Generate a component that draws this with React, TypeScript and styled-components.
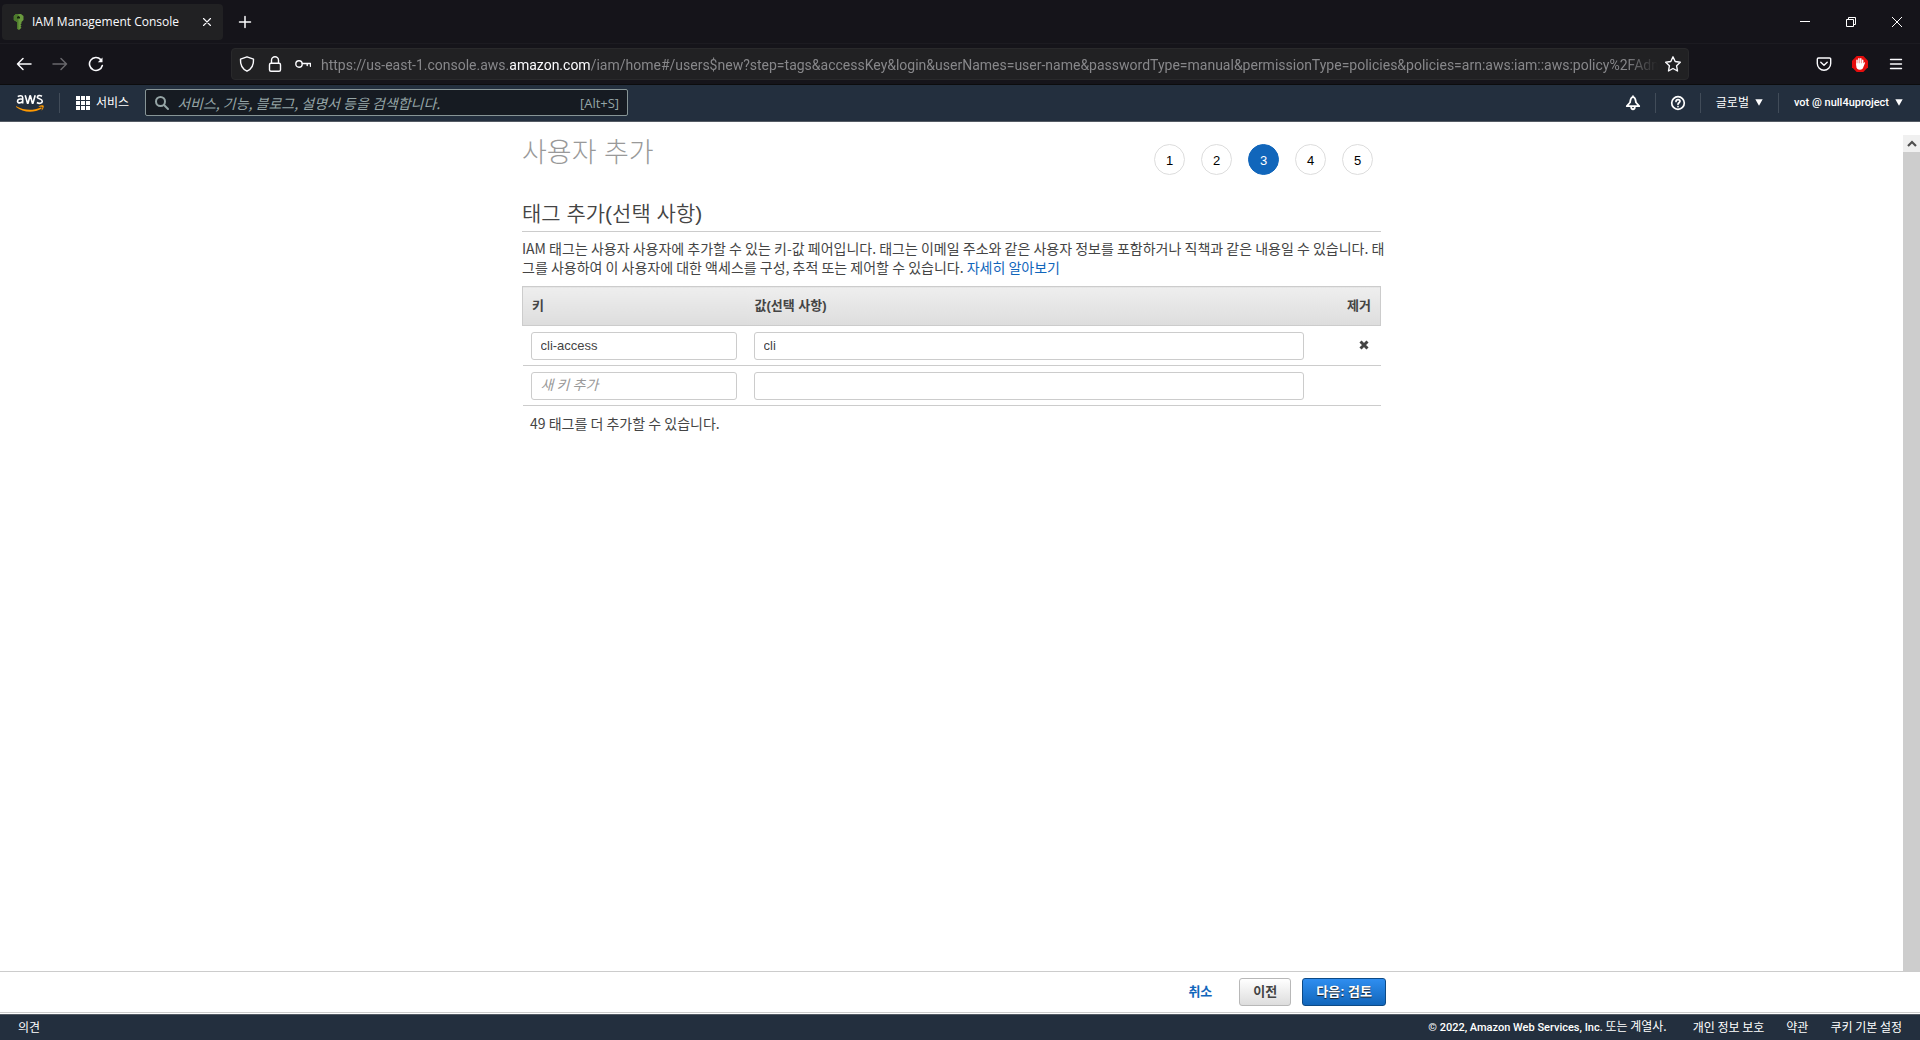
import React from "react";
import styled, { createGlobalStyle } from "styled-components";

const ui = `"Open Sans", "Noto Sans CJK KR", sans-serif`;
const compact = `Roboto, "Noto Sans CJK KR", sans-serif`;
const arial = `"Liberation Sans", "Noto Sans CJK KR", sans-serif`;
const korean = `"Noto Sans CJK KR", sans-serif`;

const Global = createGlobalStyle`
  * { box-sizing: border-box; }
  body { margin: 0; background: #fff; color: #444; font: 13px/19px ${arial}; }
  button, input { font: inherit; color: inherit; margin: 0; }
  button { cursor: pointer; }
  a { text-decoration: none; }
  svg { display: block; flex: none; }
`;

const Screen = styled.div`
  display: flex;
  flex-direction: column;
  height: 100vh;
  overflow: hidden;
`;

/* Browser window */
const TitleBar = styled.header`
  display: flex;
  align-items: center;
  height: 44px;
  padding: 0 2px;
  flex: none;
  background: #15141a;
  border-bottom: 1px solid #1c1b21;
  color: #fbfbfe;
  font-family: ${ui};
`;

const Tab = styled.div`
  display: flex;
  align-items: center;
  gap: 8px;
  width: 221px;
  height: 36px;
  padding: 0 4px 0 11px;
  border-radius: 4px;
  background: #212123;
  font-size: 12px;
`;

const TabTitle = styled.span`
  flex: 1;
  white-space: nowrap;
`;

const IconButton = styled.button<{ $w?: number; $h?: number }>`
  display: flex;
  align-items: center;
  justify-content: center;
  width: ${(p) => p.$w ?? 36}px;
  height: ${(p) => p.$h ?? 32}px;
  padding: 0;
  border: 0;
  background: none;
  color: inherit;
  flex: none;
`;

const WindowControls = styled.div`
  display: flex;
  margin-left: auto;
  margin-right: -2px;
`;

const NavBar = styled.nav`
  display: flex;
  align-items: center;
  height: 41px;
  padding: 0 6px;
  flex: none;
  background: #15141a;
  border-bottom: 1px solid #0c0c0d;
  color: #fbfbfe;
`;

const AddressBar = styled.div`
  display: flex;
  align-items: center;
  flex: 1;
  min-width: 0;
  height: 32px;
  margin: 0 117px;
  padding-left: 1px;
  border: 1px solid #29292b;
  border-radius: 4px;
  background: #212123;
`;

const Url = styled.div`
  flex: 1;
  min-width: 0;
  overflow: hidden;
  white-space: nowrap;
  margin-left: 4px;
  padding-top: 2px;
  font: 14px/20px ${compact};
  color: #87878a;
  mask-image: linear-gradient(to left, transparent, #000 32px);

  strong { font-weight: 400; color: #fbfbfe; }
`;

const Toolbar = styled.div`
  display: flex;
`;

/* AWS console header */
const ConsoleHeader = styled.header`
  display: flex;
  align-items: center;
  height: 37px;
  padding: 0 2px 1px 16px;
  flex: none;
  background: #232f3e;
  border-bottom: 1px solid #545b64;
  color: #fff;
  font: 12px/16px ${ui};
`;

const Divider = styled.span`
  width: 1px;
  height: 20px;
  background: #414c59;
`;

const LogoDivider = styled(Divider)`
  margin-left: 15px;
`;

const HeaderButton = styled.button<{ $pad?: number; $account?: boolean }>`
  display: flex;
  align-items: center;
  gap: 6px;
  height: 28px;
  padding: 0 ${(p) => p.$pad ?? 15}px;
  border: 0;
  background: none;
  color: #fff;
  font-family: ${compact};
  font-size: ${(p) => (p.$account ? 11 : 12)}px;
  font-weight: ${(p) => (p.$account ? 500 : 400)};
  white-space: nowrap;
`;

const Search = styled.label`
  display: flex;
  align-items: center;
  gap: 7px;
  width: 483px;
  height: 27px;
  padding: 0 8px;
  border: 1px solid #879596;
  border-radius: 2px;
  background: #161b22;
  color: #95a5a6;
  font-size: 13px;
`;

const SearchInput = styled.input`
  flex: 1;
  min-width: 0;
  height: 20px;
  padding: 0;
  border: 0;
  outline: 0;
  background: none;
  font: 14px/20px ${korean};

  &::placeholder { color: #95a5a6; font-style: italic; opacity: 1; }
`;

const HeaderRight = styled.div`
  display: flex;
  align-items: center;
  margin-left: auto;
`;

/* Page */
const Body = styled.div`
  display: flex;
  flex: 1;
  min-height: 0;
`;

const Main = styled.main`
  flex: 1;
  min-width: 0;
`;

const Content = styled.div`
  max-width: 859px;
  margin: 0 auto;
`;

const TitleRow = styled.div`
  display: flex;
  justify-content: space-between;
  padding: 14px 8px 0 0;
`;

const Title = styled.h1`
  margin: 0;
  padding-top: 1px;
  font-size: 27px;
  line-height: 32px;
  font-weight: 300;
  color: #999;
`;

const Steps = styled.ol`
  display: flex;
  gap: 16px;
  margin: 0;
  padding: 8px 0 0;
  list-style: none;
`;

const Step = styled.li<{ $active: boolean }>`
  width: 31px;
  height: 31px;
  border: 1px solid ${(p) => (p.$active ? "#1166bb" : "#ddd")};
  border-radius: 50%;
  background: ${(p) => (p.$active ? "#1166bb" : "#fff")};
  color: ${(p) => (p.$active ? "#fff" : "#000")};
  line-height: 31px;
  text-align: center;
`;

const Heading = styled.h2`
  margin: 25px 0 7px;
  padding-bottom: 3px;
  border-bottom: 1px solid #ccc;
  font-size: 21px;
  line-height: 28px;
  font-weight: 350;
`;

const Intro = styled.p`
  margin: 0 0 9px;
  font: 14px/19px ${korean};
  white-space: nowrap;
`;

const Link = styled.a`
  color: #1166bb;
`;

const TagTable = styled.table`
  width: 100%;
  border-collapse: collapse;
  table-layout: fixed;
`;

const Th = styled.th<{ $w?: number; $right?: boolean }>`
  width: ${(p) => (p.$w ? `${p.$w}px` : "auto")};
  height: 39px;
  padding: 0 9px 2px;
  border: solid #ccc;
  border-width: 1px 0;
  background: linear-gradient(#eee, #ddd);
  text-align: ${(p) => (p.$right ? "right" : "left")};
  font-weight: 700;
  &:first-child { border-left-width: 1px; }
  &:last-child { border-right-width: 1px; }
`;

const Td = styled.td<{ $right?: boolean }>`
  height: 40px;
  padding: 0 ${(p) => (p.$right ? 10 : 9)}px 0 8px;
  border-bottom: 1px solid #ccc;
  text-align: ${(p) => (p.$right ? "right" : "left")};
`;

const TagInput = styled.input`
  display: block;
  width: 100%;
  height: 28px;
  padding: 0 9px;
  border: 1px solid #ccc;
  border-radius: 3px;
  background: #fff;

  &::placeholder {
    color: #999;
    font: italic 14px/19px ${korean};
    opacity: 1;
  }
`;

const RemoveButton = styled.button`
  padding: 2px;
  border: 0;
  background: none;
`;

const Remaining = styled.p`
  margin: 8px;
  font: 14px/19px ${korean};
`;

const ScrollTrack = styled.div`
  display: flex;
  flex-direction: column;
  width: 17px;
  margin-top: 13px;
  background: #f0f0f0;
`;

const ScrollThumb = styled.div`
  flex: 1;
  background: #cdcdcd;
`;

const ActionBar = styled.div`
  flex: none;
  border-top: 1px solid #ccc;
  border-bottom: 1px solid #ccc;
  margin-bottom: 1px;
`;

const Actions = styled.div`
  display: flex;
  align-items: center;
  justify-content: flex-end;
  max-width: 860px;
  height: 40px;
  margin: 0 auto;
  padding: 0 4px 0 0;
`;

const ActionButton = styled.button<{ $kind: "link" | "plain" | "primary" }>`
  height: 28px;
  margin-left: 11px;
  padding: 0 ${(p) => (p.$kind === "link" ? 15 : 13)}px 2px;
  border: 1px solid ${(p) => ({ link: "transparent", plain: "#b8b8b8", primary: "#0d4a86" })[p.$kind]};
  border-radius: 3px;
  background: ${(p) =>
    ({ link: "none", plain: "linear-gradient(#fff, #ddd)", primary: "linear-gradient(#2f8ef0, #1166bb)" })[p.$kind]};
  color: ${(p) => ({ link: "#1166bb", plain: "#444", primary: "#fff" })[p.$kind]};
  text-shadow: ${(p) => (p.$kind === "primary" ? "0 1px 1px #222" : "none")};
  font-weight: 700;
`;

const Footer = styled.footer`
  display: flex;
  align-items: center;
  gap: 22px;
  height: 26px;
  padding: 0 18px 2px;
  flex: none;
  border-top: 1px solid #545b64;
  background: #232f3e;
  color: #fff;
  font: 12px/16px ${korean};
  white-space: nowrap;

  a { color: #fff; }
`;

const Copyright = styled.span`
  margin-left: auto;
  margin-right: 4px;

  span {
    font-family: ${compact};
    font-size: 11px;
    font-weight: 500;
  }
`;

const Stroke = ({ s = 16, w = 1.4, children }: { s?: number; w?: number; children: React.ReactNode }) => (
  <svg width={s} height={s} viewBox="0 0 16 16" fill="none" stroke="currentColor" strokeWidth={w} strokeLinecap="round" strokeLinejoin="round" aria-hidden="true">
    {children}
  </svg>
);

const Caret = () => (
  <svg width="8" height="7" viewBox="0 0 8 7" aria-hidden="true">
    <path d="M.3 .3h7.4L4 6.8z" fill="#fff" />
  </svg>
);

const KeyFavicon = () => (
  <svg width="11" height="16" viewBox="0 0 11 16" aria-hidden="true">
    <path d="M3 0h5l2.500 2v4L8.500 8v1.500l-1 1 1 1-1 1.200 1 1L6 16l-2-1.500V8L.8 6V2z" fill="#6a9a3e" />
    <path d="M3 0h2.500v16L4 14.500V8L.8 6V2z" fill="#4c7a2c" />
    <path d="M4 3l1.500-1L7 3v1.500H4z" fill="#15240c" />
  </svg>
);

const AwsLogo = () => (
  <svg width="28" height="18" viewBox="0 0 28 18" fill="none" aria-label="aws">
    <g stroke="#fff" strokeWidth="1.600" strokeLinejoin="round">
      <path d="M1.800 2.700C3.500 1.300 6.700 1.100 6.700 3.700V9.500M6.700 5.300C3.800 4.600 1.500 5.200 1.500 7.300S5.500 9.600 6.700 7" />
      <path d="M9.200 1.300l2.300 7.900h.5l2-7.500h.4l2 7.500h.5l2.300-7.900" />
      <path d="M26 2.200C23.800 1.100 21.300 1.400 21.300 3.200s5 1.500 5 4-3.500 2.600-5.400 1.300" />
    </g>
    <path d="M.3 12.300c7.500 4.300 16.500 4.700 24.400 1.300.9-.4 1.500.5.7 1.100C18 19.300 6.500 18.600.1 12.900c-.3-.4-.1-.8.2-.6z" fill="#f90" />
    <path d="M22.800 12.200c1.500-1.100 4.300-1.100 4.800-.5s-.2 3.400-1.600 4.600c-.3.200-.5.100-.4-.2.500-1.200 1.100-2.700.8-3.100s-2.200-.3-3.300-.2c-.5 0-.6-.3-.3-.6z" fill="#f90" />
  </svg>
);

const AppGrid = () => (
  <svg width="14" height="14" viewBox="0 0 14 14" fill="#fff" aria-hidden="true">
    {[0, 5, 10].map((y) => [0, 5, 10].map((x) => <rect key={`${x}-${y}`} x={x} y={y} width="4" height="4" />))}
  </svg>
);

const rows = [
  { key: "cli-access", value: "cli" },
  { key: "", value: "" },
];

export default function App() {
  return (
    <Screen>
      <Global />
      <TitleBar>
        <Tab>
          <KeyFavicon />
          <TabTitle>IAM Management Console</TabTitle>
          <IconButton $w={24} $h={24} aria-label="Close tab">
            <Stroke s={14} w={1.3}><path d="M4 4l8 8M12 4l-8 8" /></Stroke>
          </IconButton>
        </Tab>
        <IconButton $w={44} aria-label="New tab">
          <Stroke w={1.5}><path d="M8 2.500v11M2.500 8h11" /></Stroke>
        </IconButton>
        <WindowControls>
          <IconButton $w={46} aria-label="Minimize">
            <svg width="10" height="10" viewBox="0 0 10 10" stroke="#fff"><path d="M0 4.500h10" /></svg>
          </IconButton>
          <IconButton $w={46} aria-label="Restore">
            <svg width="10" height="10" viewBox="0 0 10 10" fill="none" stroke="#fff"><path d="M.5 2.500h7v7h-7zM2.500 2.500v-2h7v7h-2" /></svg>
          </IconButton>
          <IconButton $w={46} aria-label="Close">
            <svg width="10" height="10" viewBox="0 0 10 10" stroke="#fff"><path d="M0 0l10 10M10 0L0 10" /></svg>
          </IconButton>
        </WindowControls>
      </TitleBar>

      <NavBar>
        <IconButton aria-label="Back">
          <Stroke w={1.5}><path d="M15 8H1.500M7 2.500L1.500 8 7 13.500" /></Stroke>
        </IconButton>
        <IconButton aria-label="Forward" disabled>
          <Stroke w={1.5}><path stroke="#68676c" d="M1 8h13.500M9 2.500L14.500 8 9 13.500" /></Stroke>
        </IconButton>
        <IconButton aria-label="Reload">
          <Stroke w={1.6}><path d="M14.300 9.500A6.500 6.500 0 1 1 12.800 3.600" /><path d="M14.500 1.500v4.700H9.800z" fill="currentColor" stroke="none" /></Stroke>
        </IconButton>
        <AddressBar>
          <IconButton $w={28} aria-label="Tracking protection">
            <Stroke><path d="M8 .8L1.500 3.200C1.200 8 2.500 12.500 8 15.200 13.500 12.500 14.800 8 14.500 3.200z" /></Stroke>
          </IconButton>
          <IconButton $w={28} aria-label="Site information">
            <Stroke><rect x="2.500" y="7.200" width="11" height="8" rx="1.500" /><path d="M4.500 7V4.200a3.500 3.500 0 0 1 7 0V7" /></Stroke>
          </IconButton>
          <IconButton $w={28} aria-label="Saved login">
            <Stroke><circle cx="4" cy="8" r="3.200" /><path d="M7.300 7.500h8.200v2.800M12.200 7.500v2" /></Stroke>
          </IconButton>
          <Url>
            https://us-east-1.console.aws.<strong>amazon.com</strong>
            /iam/home#/users$new?step=tags&amp;accessKey&amp;login&amp;userNames=user-name&amp;passwordType=manual&amp;permissionType=policies&amp;policies=arn:aws:iam::aws:policy%2FAdmi
          </Url>
          <IconButton $w={30} aria-label="Bookmark">
            <Stroke><path d="M8 .8l2.200 4.700 5.100.7-3.700 3.600.9 5.200L8 12.500 3.500 15l.9-5.200L.7 6.200l5.100-.7z" /></Stroke>
          </IconButton>
        </AddressBar>
        <Toolbar>
          <IconButton aria-label="Pocket">
            <Stroke><path d="M2.500 2h11A1.200 1.200 0 0 1 14.700 3.200V7.500A6.700 6.700 0 0 1 1.300 7.500V3.200A1.200 1.200 0 0 1 2.500 2zM4.800 6.300L8 9.300l3.200-3" /></Stroke>
          </IconButton>
          <IconButton aria-label="Ad blocker">
            <svg width="16" height="16" viewBox="0 0 16 16" aria-hidden="true">
              <path d="M4.700 0h6.600L16 4.700v6.600L11.300 16H4.700L0 11.300V4.700z" fill="#e40d0d" />
              <path d="M5 9V4.200M6.900 8V2.800M8.800 8V2.800M10.700 9V4.200" stroke="#fff" strokeWidth="1.500" strokeLinecap="round" />
              <path d="M4.300 7.200h7.200l.8-.8c.6-.4 1 .2.700.7l-2 5c-.5 1.300-1.500 1.700-3 1.700-2.500 0-3.700-1.500-3.700-3.500z" fill="#fff" />
            </svg>
          </IconButton>
          <IconButton aria-label="Menu">
            <Stroke w={1.4}><path d="M2.500 3.500h11M2.500 8h11M2.500 12.500h11" /></Stroke>
          </IconButton>
        </Toolbar>
      </NavBar>

      <ConsoleHeader>
        <AwsLogo />
        <LogoDivider />
        <HeaderButton $pad={16}>
          <AppGrid />
          서비스
        </HeaderButton>
        <Search>
          <Stroke w={2}><circle cx="6.500" cy="6.500" r="4.500" /><path d="M10 10l4 4" /></Stroke>
          <SearchInput type="search" aria-label="검색" placeholder="서비스, 기능, 블로그, 설명서 등을 검색합니다." />
          <span>[Alt+S]</span>
        </Search>
        <HeaderRight>
          <IconButton $w={44} $h={28} aria-label="알림">
            <Stroke w={1.800}><path d="M8 2.200C5.500 2.200 5.500 5 5 7.500L1.800 11.200h12.400L11 7.500C10.500 5 10.500 2.200 8 2.200zM8 1.200v1M6.200 12c0 3 3.600 3 3.600 0" /></Stroke>
          </IconButton>
          <Divider />
          <IconButton $w={44} $h={28} aria-label="도움말">
            <Stroke w={1.700}><circle cx="8" cy="8" r="6.300" /><path d="M6 6.500C6 4 10 4 10 6.300 10 7.700 8 7.800 8 9.300M8 11.500v.1" /></Stroke>
          </IconButton>
          <Divider />
          <HeaderButton>글로벌 <Caret /></HeaderButton>
          <Divider />
          <HeaderButton $account>vot @ null4uproject <Caret /></HeaderButton>
        </HeaderRight>
      </ConsoleHeader>

      <Body>
        <Main>
          <Content>
            <TitleRow>
              <Title>사용자 추가</Title>
              <Steps>
                {[1, 2, 3, 4, 5].map((n) => (
                  <Step key={n} $active={n === 3}>{n}</Step>
                ))}
              </Steps>
            </TitleRow>
            <Heading>태그 추가(선택 사항)</Heading>
            <Intro>
              IAM 태그는 사용자 사용자에 추가할 수 있는 키-값 페어입니다. 태그는 이메일 주소와 같은 사용자 정보를 포함하거나 직책과 같은 내용일 수 있습니다. 태
              <br />
              그를 사용하여 이 사용자에 대한 액세스를 구성, 추적 또는 제어할 수 있습니다. <Link href="#learn">자세히 알아보기</Link>
            </Intro>
            <TagTable>
              <thead>
                <tr>
                  <Th $w={223}>키</Th>
                  <Th>값(선택 사항)</Th>
                  <Th $w={68} $right>제거</Th>
                </tr>
              </thead>
              <tbody>
                {rows.map((r, i) => (
                  <tr key={i}>
                    <Td><TagInput aria-label="키" defaultValue={r.key} placeholder="새 키 추가" /></Td>
                    <Td><TagInput aria-label="값" defaultValue={r.value} /></Td>
                    <Td $right>
                      {r.key && (
                        <RemoveButton aria-label="제거">
                          <svg width="10" height="10" viewBox="0 0 10 10" aria-hidden="true">
                            <path d="M1.500 1.500l7 7M8.500 1.500l-7 7" stroke="#444" strokeWidth="3" />
                          </svg>
                        </RemoveButton>
                      )}
                    </Td>
                  </tr>
                ))}
              </tbody>
            </TagTable>
            <Remaining>49 태그를 더 추가할 수 있습니다.</Remaining>
          </Content>
        </Main>
        <ScrollTrack>
          <IconButton $w={17} $h={17} aria-label="Scroll up">
            <svg width="10" height="8" viewBox="0 0 10 8" fill="none" stroke="#505050" strokeWidth="2.200"><path d="M1 6l4-4 4 4" /></svg>
          </IconButton>
          <ScrollThumb />
        </ScrollTrack>
      </Body>

      <ActionBar>
        <Actions>
          <ActionButton $kind="link">취소</ActionButton>
          <ActionButton $kind="plain">이전</ActionButton>
          <ActionButton $kind="primary">다음: 검토</ActionButton>
        </Actions>
      </ActionBar>

      <Footer>
        <a href="#feedback">의견</a>
        <Copyright><span>© 2022, Amazon Web Services, Inc.</span> 또는 계열사.</Copyright>
        <a href="#privacy">개인 정보 보호</a>
        <a href="#terms">약관</a>
        <a href="#cookies">쿠키 기본 설정</a>
      </Footer>
    </Screen>
  );
}
